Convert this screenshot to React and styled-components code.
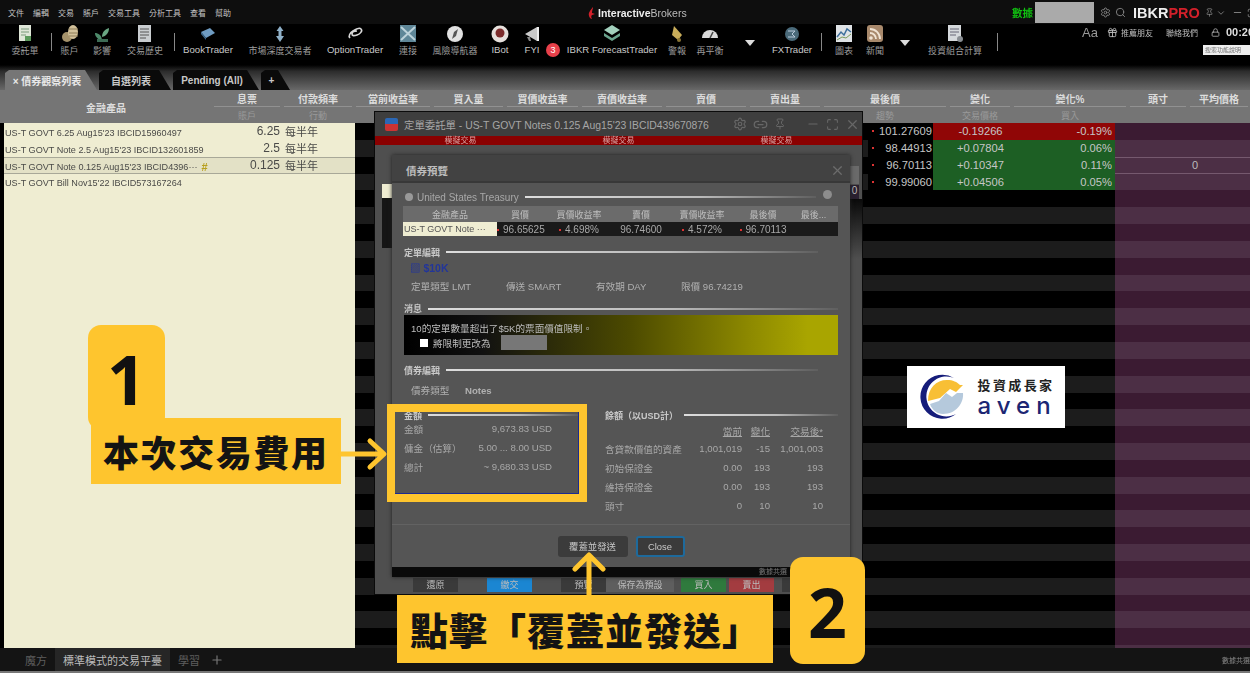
import React from "react";
import styled, { createGlobalStyle } from "styled-components";
import { Settings, Search, Pin, ChevronDown, Minus, Maximize, X, Link2, Gift, Lock, Plus } from "lucide-react";

const GlobalStyle = createGlobalStyle`
  html, body { margin: 0; padding: 0; background: #000; }
  body { font-family: "Liberation Sans", "Noto Sans CJK TC", sans-serif; }
  * { box-sizing: border-box; }
`;

const Page = styled.div`
  position: relative;
  width: 1250px;
  height: 673px;
  overflow: hidden;
  background: #000;
`;

const Screen = styled.div`
  display: flex;
  flex-direction: column;
  width: 1250px;
  height: 673px;
  filter: blur(0.55px);
`;

/* top menu bar */
const TopBar = styled.div`
  display: grid;
  grid-template-columns: 588px 300px 1fr;
  align-items: center;
  height: 24px;
  padding-top: 1px;
  background: #0e0e0e;
`;

const Menu = styled.div`
  display: flex;
  gap: 9px;
  padding-left: 8px;
  font-size: 8px;
  color: #c4c4c4;
`;

const Brand = styled.div`
  display: flex;
  align-items: center;
  gap: 2px;
  font-size: 10.5px;
  color: #bbb;
  b { color: #eee; }
`;

const TopRight = styled.div`
  display: flex;
  align-items: center;
  padding-left: 124px;
  color: #888;
`;

const DataTag = styled.span`
  width: 23px;
  font-size: 10.5px;
  font-weight: 700;
  color: #10c010;
`;

const Masked = styled.div`
  width: 59px;
  height: 21px;
  margin-right: 6px;
  background: #aaa;
`;

const Pro = styled.span`
  margin: 0 5px 0 7px;
  font-size: 14.5px;
  font-weight: 700;
  color: #eee;
  i { font-style: normal; color: #d3202a; }
`;

/* tool strip */
const Toolbar = styled.div`
  display: flex;
  height: 41px;
  background: #000;
`;

const Tool = styled.div`
  display: flex;
  flex-direction: column;
  align-items: center;
  flex: none;
  width: ${(p) => p.$w}px;
  white-space: nowrap;
  font-size: ${(p) => (p.$latin ? 9.6 : 9)}px;
  color: ${(p) => (p.$latin ? "#c8c8c8" : "#9c9c9c")};
  svg { flex: none; }
`;

const Divider = styled.div`
  flex: none;
  width: ${(p) => p.$w}px;
  height: 18px;
  margin-top: 9px;
  background: linear-gradient(#888, #888) no-repeat center / 1px 100%;
`;

const DropCaret = styled.div`
  flex: none;
  display: flex;
  justify-content: center;
  width: ${(p) => p.$w}px;
  padding-top: 16px;
  &::after {
    content: "";
    border-left: 5px solid transparent;
    border-right: 5px solid transparent;
    border-top: 6px solid #ddd;
    height: 0;
  }
`;

const Badge = styled.div`
  flex: none;
  align-self: flex-start;
  width: 14px;
  height: 14px;
  margin: 19px -1px 0 -3px;
  border-radius: 50%;
  background: #e8404a;
  color: #fff;
  font-size: 9px;
  line-height: 14px;
  text-align: center;
`;

const Extras = styled.div`
  flex: 1;
  display: flex;
  flex-direction: column;
  align-items: flex-end;
  overflow: hidden;
  margin-left: 77px;
`;

const ExtrasRow = styled.div`
  display: flex;
  align-items: center;
  align-self: flex-start;
  gap: 3px;
  height: 16px;
  white-space: nowrap;
  font-size: 8px;
  color: #bbb;
  em { font-style: normal; font-size: 13px; color: #999; margin-right: 1px; }
  strong { font-size: 11px; margin-left: 3px; color: #ddd; }
`;

const SearchBox = styled.div`
  width: 47px;
  height: 10px;
  margin-top: 5px;
  padding-left: 2px;
  background: #eee;
  color: #777;
  font-size: 6px;
  line-height: 10px;
  white-space: nowrap;
  overflow: hidden;
`;

/* tab strip */
const TabStrip = styled.div`
  display: flex;
  align-items: flex-end;
  gap: 2px;
  height: 25px;
  padding-left: 5px;
  background: linear-gradient(#000 0%, #2c2c2c 25%, #686868 100%);
`;

const Tab = styled.div`
  display: flex;
  align-items: center;
  justify-content: center;
  width: ${(p) => p.$w}px;
  height: 20px;
  padding-right: 8px;
  font-size: 10px;
  font-weight: 700;
  clip-path: polygon(0 15%, 4px 0, calc(100% - 12px) 0, 100% 100%, 0 100%);
  background: ${(p) => (p.$on ? "#767676" : "#0a0a0a")};
  color: ${(p) => (p.$on ? "#e8e8e8" : "#c8c8c8")};
`;

/* table header */
const HeadRow = styled.div`
  display: grid;
  grid-template-columns: 212px 70px 72px 78px 73px 75px 84px 84px 74px 126px 64px 116px 60px 1fr;
  height: 33px;
  padding-top: 1px;
  background: #757575;
`;

const HeadCell = styled.div`
  display: flex;
  flex-direction: column;
  align-items: center;
  justify-content: ${(p) => (p.$tall ? "center" : "flex-start")};
  margin: 0 2px;
  font-size: 10px;
  font-weight: 700;
  color: #ddd;
  white-space: nowrap;
`;

const HeadTop = styled.div`
  align-self: stretch;
  height: 16px;
  text-align: center;
  border-bottom: 1px solid #919191;
`;

const HeadSub = styled.div`
  margin-top: 2px;
  font-size: 9px;
  font-weight: 400;
  color: #9a9a9a;
`;

/* table body */
const Body = styled.div`
  flex: 1;
  display: flex;
  flex-direction: column;
  overflow: hidden;
  min-height: 0;
`;

const Row = styled.div`
  display: grid;
  grid-template-columns: 4px 228px 48px 75px 513px 65px 95px 87px 85px 50px;
  flex: none;
  height: 16.85px;
  align-items: stretch;
`;

const Gutter = styled.div`
  background: #000;
`;

const Cream = styled.div`
  display: flex;
  align-items: center;
  justify-content: ${(p) => (p.$end ? "flex-end" : "flex-start")};
  padding-left: ${(p) => (p.$pad ? p.$pad : 1)}px;
  padding-top: ${(p) => p.$pt || 0}px;
  background: ${(p) => (p.$picked ? "#e3e1c6" : "#efedd2")};
  border-top: ${(p) => (p.$picked ? "1px solid #a8a898" : "0")};
  border-bottom: ${(p) => (p.$picked ? "1px solid #a8a898" : "0")};
  font-size: ${(p) => p.$size || 9.1}px;
  color: #4a4a48;
  white-space: nowrap;
  overflow: hidden;
  i { margin-left: 4px; font-style: normal; color: #b8a020; font-weight: 700; font-size: 11px; }
`;

const Dark = styled.div`
  background: ${(p) => (p.$odd ? "#1c1c1c" : "#000")};
`;

const Quote = styled.div`
  display: flex;
  align-items: center;
  justify-content: space-between;
  padding: 0 1px 0 4px;
  font-size: 11.2px;
  color: #c6c6c6;
  white-space: nowrap;
  background: ${(p) => (p.$tone === "red" ? "#900606" : p.$tone === "green" ? "#1d5f24" : "#000")};
  u { text-decoration: none; width: 2px; height: 2px; background: #d33; }
`;

const Change = styled(Quote)`
  justify-content: ${(p) => (p.$center ? "center" : "flex-end")};
  padding: 0 ${(p) => (p.$center ? 0 : 3)}px 0 0;
`;

const Plum = styled.div`
  display: flex;
  align-items: center;
  justify-content: flex-end;
  padding-right: 2px;
  font-size: 11px;
  color: #bbb;
  background: ${(p) => (p.$odd ? "#4c2f45" : "#3b1b32")};
  border-top: ${(p) => (p.$line ? "1px solid #75596e" : "0")};
  border-bottom: ${(p) => (p.$line ? "1px solid #75596e" : "0")};
`;

const BottomTabs = styled.div`
  display: flex;
  align-items: center;
  height: 25px;
  padding-left: 17px;
  background: #141414;
  border-bottom: 2px solid #777;
  font-size: 11px;
  color: #555;
`;

const BottomTab = styled.div`
  display: flex;
  align-items: center;
  height: 23px;
  padding: 0 8px;
  background: ${(p) => (p.$on ? "#262626" : "transparent")};
  color: ${(p) => (p.$on ? "#bdbdbd" : "#5e5e5e")};
`;

const BottomNote = styled.div`
  margin-left: auto;
  font-size: 7px;
  color: #888;
`;

/* order window */
const OrderWindow = styled.div`
  position: absolute;
  left: 375px;
  top: 112px;
  width: 487px;
  height: 482px;
  display: flex;
  flex-direction: column;
  background: #4f4f4f;
  box-shadow: 0 0 0 1px #0b0b0b;
`;

const OrderTitle = styled.div`
  display: flex;
  align-items: center;
  gap: 6px;
  height: 24px;
  padding: 0 2px 0 10px;
  background: #3e3e3e;
  font-size: 10.4px;
  color: #a6a6a6;
  white-space: nowrap;
`;

const Flag = styled.div`
  width: 13px;
  height: 13px;
  background: linear-gradient(#2b67b5 50%, #c33 50%);
  border-radius: 2px;
`;

const TitleTools = styled.div`
  display: flex;
  align-items: center;
  gap: 6px;
  margin-left: auto;
  color: #676767;
`;

const SimBand = styled.div`
  display: grid;
  grid-template-columns: repeat(3, 158px);
  justify-content: center;
  height: 9px;
  background: #8a0000;
  font-size: 8px;
  line-height: 9px;
  text-align: center;
  color: #d8a0a0;
`;

const OrderButtons = styled.div`
  display: flex;
  margin-top: auto;
  height: 14px;
  margin-bottom: 2px;
  padding-left: 38px;
`;

const OrderButton = styled.div`
  flex: none;
  width: ${(p) => p.$w}px;
  margin-left: ${(p) => p.$ml || 0}px;
  background: ${(p) => p.$bg};
  color: #bbb;
  font-size: 9px;
  line-height: 14px;
  text-align: center;
  white-space: nowrap;
  overflow: hidden;
`;

const SideStub = styled.div`
  position: absolute;
  left: ${(p) => p.$x}px;
  top: ${(p) => p.$y}px;
  width: ${(p) => p.$w}px;
  height: ${(p) => p.$h}px;
  background: ${(p) => p.$bg};
  color: #bbb;
  font-size: 10px;
  text-align: center;
`;

/* preview dialog */
const Preview = styled.div`
  position: absolute;
  left: 17px;
  top: 43px;
  width: 458px;
  height: 422px;
  display: flex;
  flex-direction: column;
  background: #555;
  box-shadow: 0 0 4px #222;
`;

const PreviewTitle = styled.div`
  display: flex;
  align-items: center;
  justify-content: space-between;
  height: 28px;
  padding: 4px 5px 0 14px;
  background: #424242;
  border-bottom: 2px solid #383838;
  font-size: 10.5px;
  font-weight: 700;
  color: #bdbdbd;
`;

const PreviewBody = styled.div`
  flex: 1;
  display: flex;
  flex-direction: column;
  padding: 7px 12px 0;
`;

const Section = styled.div`
  display: flex;
  align-items: center;
  gap: 6px;
  flex: none;
  height: ${(p) => p.$h || 14}px;
  margin-top: ${(p) => p.$mt || 0}px;
  font-size: ${(p) => (p.$plain ? 10 : 9)}px;
  font-weight: ${(p) => (p.$plain ? 400 : 700)};
  color: ${(p) => (p.$plain ? "#a8a8a8" : "#c8c8c8")};
  white-space: nowrap;
  &::after {
    content: "";
    flex: 1;
    height: 2px;
    margin-right: ${(p) => p.$end || 0}px;
    background: linear-gradient(90deg, #ddd 0%, #bbb 60%, #5f5f5f 100%);
  }
`;

const Dot = styled.span`
  width: 8px;
  height: 8px;
  margin-left: 1px;
  margin-right: -2px;
  border-radius: 50%;
  background: #999;
`;

const SectionKnob = styled.span`
  position: absolute;
  right: 18px;
  top: 35px;
  width: 9px;
  height: 9px;
  border-radius: 50%;
  background: #8d8d8d;
`;

const Quotes = styled.div`
  flex: none;
  margin-top: 2px;
  margin-left: -1px;
  width: 435px;
`;

const QuoteGrid = styled.div`
  display: grid;
  grid-template-columns: 94px 46px 72px 52px 70px 52px 49px;
  height: ${(p) => p.$h}px;
  align-items: center;
  background: ${(p) => p.$bg};
  font-size: ${(p) => p.$size}px;
  color: ${(p) => p.$color};
  text-align: center;
  white-space: nowrap;
`;

const QuoteName = styled.div`
  align-self: stretch;
  background: #efedd2;
  color: #555;
  font-size: 9px;
  line-height: 14px;
  text-align: left;
  padding-left: 1px;
`;

const Tick = styled.span`
  display: inline-block;
  width: 2px;
  height: 2px;
  margin-right: 4px;
  vertical-align: middle;
  background: #d33;
`;

const Dim = styled.div`
  flex: none;
  height: 14px;
  margin-top: 1px;
  padding-left: 6px;
  font-size: 10.5px;
  font-weight: 700;
  color: #22359a;
`;

const Facts = styled.div`
  display: flex;
  flex: none;
  height: 14px;
  margin-top: 6px;
  padding-left: 7px;
  font-size: 9.6px;
  line-height: 14px;
  color: #b0b0b0;
  white-space: nowrap;
`;

const Fact = styled.span`
  width: ${(p) => p.$w}px;
  flex: none;
`;

const Banner = styled.div`
  flex: none;
  height: 40px;
  padding: 5px 7px 0;
  background: linear-gradient(90deg, #000 0%, #111 18%, #4c4a00 52%, #8e8a00 80%, #a9a500 93%);
  font-size: 9.6px;
  color: #bdbdbd;
`;

const BannerLine = styled.div`
  display: flex;
  align-items: center;
  gap: 5px;
  height: 15px;
  padding-left: ${(p) => p.$pad || 0}px;
  white-space: nowrap;
`;

const CheckBox = styled.div`
  width: 8px;
  height: 8px;
  background: #fff;
`;

const BlankInput = styled.div`
  width: 46px;
  height: 15px;
  margin-left: 5px;
  background: #777;
`;

const Columns = styled.div`
  display: grid;
  grid-template-columns: 175px 233px;
  column-gap: 26px;
  flex: none;
  height: 116px;
  margin-top: 10px;
`;

const Pairs = styled.div`
  margin-top: -3px;
`;

const Pair = styled.div`
  display: flex;
  align-items: center;
  justify-content: space-between;
  width: 148px;
  height: 19px;
  font-size: 9.6px;
  color: #a8a8a8;
  white-space: nowrap;
`;

const Margins = styled.div`
  display: grid;
  grid-template-columns: 92px 45px 28px 53px;
  grid-template-rows: 16px;
  grid-auto-rows: 19px;
  align-items: center;
  margin-top: 1px;
  font-size: 9.6px;
  color: #a8a8a8;
  white-space: nowrap;
`;

const Num = styled.div`
  text-align: right;
  text-decoration: ${(p) => (p.$head ? "underline" : "none")};
`;

const PreviewFooter = styled.div`
  display: flex;
  justify-content: center;
  gap: 8px;
  flex: none;
  height: 43px;
  padding-top: 11px;
  border-top: 1px solid #626262;
  background: #555;
`;

const DialogButton = styled.div`
  width: ${(p) => p.$w}px;
  height: 21px;
  border-radius: 3px;
  background: #3b3b3b;
  border: ${(p) => (p.$focus ? "2px solid #1e6a9c" : "0")};
  color: #c8c8c8;
  font-size: 9.4px;
  line-height: ${(p) => (p.$focus ? 17 : 21)}px;
  text-align: center;
`;

const StatusBar = styled.div`
  flex: none;
  height: 10px;
  padding-right: 63px;
  background: #0a0a0a;
  color: #777;
  font-size: 7px;
  line-height: 10px;
  text-align: right;
`;

/* logo stamp */
const LogoCard = styled.div`
  position: absolute;
  left: 907px;
  top: 366px;
  width: 158px;
  height: 62px;
  display: flex;
  align-items: center;
  gap: 9px;
  padding-left: 11px;
  background: #fff;
`;

const LogoText = styled.div`
  display: flex;
  flex-direction: column;
  align-items: center;
  width: 82px;
`;

const LogoName = styled.div`
  font-size: 13px;
  font-weight: 700;
  letter-spacing: 2.4px;
  color: #222;
  line-height: 17px;
  white-space: nowrap;
`;

const LogoLatin = styled.div`
  font-family: "Inter", "Liberation Sans", sans-serif;
  font-size: 24px;
  font-weight: 500;
  letter-spacing: 6px;
  line-height: 23px;
  margin-right: -2px;
  color: #1c2673;
`;

/* tutorial callouts */
const NumberTile = styled.div`
  position: absolute;
  left: ${(p) => p.$x}px;
  top: ${(p) => p.$y}px;
  width: ${(p) => p.$w}px;
  height: ${(p) => p.$h}px;
  padding-top: ${(p) => p.$pt}px;
  border-radius: 13px;
  background: #fec52e;
  color: #111;
  font-family: "Noto Sans", "Liberation Sans", sans-serif;
  font-size: 68px;
  font-weight: 700;
  line-height: 68px;
  text-align: center;
`;

const Callout = styled.div`
  position: absolute;
  left: ${(p) => p.$x}px;
  top: ${(p) => p.$y}px;
  width: ${(p) => p.$w}px;
  height: ${(p) => p.$h}px;
  padding-left: ${(p) => p.$pl}px;
  background: #fec52e;
  color: #141414;
  font-family: "Noto Sans CJK TC", sans-serif;
  font-size: ${(p) => p.$size}px;
  font-weight: 900;
  letter-spacing: ${(p) => p.$ls}px;
  line-height: ${(p) => p.$h}px;
  white-space: nowrap;
`;

const Highlight = styled.div`
  position: absolute;
  left: 387px;
  top: 404px;
  width: 200px;
  height: 98px;
  border: 8px solid #fec52e;
  box-shadow: inset -1px -1px 0 #1b2a92;
`;

const Arrow = styled.svg`
  position: absolute;
  left: ${(p) => p.$x}px;
  top: ${(p) => p.$y}px;
  overflow: visible;
`;

const ico = {
  order: <><rect x="4" y="1" width="12" height="16" fill="#dfe6d8" /><path d="M6 5h8M6 8h8M6 11h5" stroke="#7a9a7a" /><rect x="10" y="12" width="6" height="5" fill="#5c9a5c" /></>,
  coins: <><ellipse cx="7" cy="13" rx="5" ry="5" fill="#a5926a" /><ellipse cx="13" cy="8" rx="5" ry="7" fill="#d2c19a" /><path d="M9 5h9M9 9h9M9 12h9" stroke="#8e7d58" /></>,
  plant: <><path d="M10 17C10 11 6 9 3 9c0 4 3 6 7 8Z" fill="#4d8a6a" /><path d="M10 13c0-6 4-8 7-9 0 5-3 8-7 9Z" fill="#6aa683" /><rect x="5" y="15" width="11" height="3" fill="#3d6b55" /></>,
  doc: <><rect x="3" y="1" width="13" height="17" fill="#c9cdd0" /><path d="M5 5h9M5 8h9M5 11h9M5 14h6" stroke="#555" /></>,
  book: <><path d="M3 8l9-4 5 5-9 5Z" fill="#6f9cc2" /><path d="M3 8l5 6v2L3 10Z" fill="#3e6a8e" /></>,
  updown: <path d="M10 2l3.5 5H11.500v5H14l-4 6-4-6h2.500V7H6.500Z" fill="#8fb0c8" />,
  clip: <path d="M5 14c-2-2 0-5 3-7s6-4 8-2-1 5-4 6-5 1-5-1 3-3 5-3" fill="none" stroke="#d8d8d8" strokeWidth="1.6" />,
  grid: <><rect x="2" y="1" width="16" height="17" fill="#5f8798" /><path d="M3 3l14 13M17 3L3 16" stroke="#bcd2da" strokeWidth="2" /></>,
  compass: <><circle cx="10" cy="10" r="8" fill="#e2e2e2" /><path d="M13 5l-2 7-4 3 2-7Z" fill="#555" /></>,
  ibot: <><circle cx="10" cy="10" r="8.500" fill="#e6e0dc" /><circle cx="10" cy="9" r="4.500" fill="#7d2c2c" /></>,
  horn: <><path d="M3 10l12-7v14Z" fill="#c9c9c9" /><path d="M5 13l2 4h2l-1-4Z" fill="#888" /><rect x="15" y="3" width="2" height="14" fill="#eee" /></>,
  layers: <><path d="M10 1l8 5-8 5-8-5Z" fill="#a3d0bd" /><path d="M2 9l8 5 8-5v3l-8 5-8-5Z" fill="#6aa38d" /></>,
  bell: <><path d="M7 2l8 9-4 5-6-5Z" fill="#c9ad5a" /><circle cx="12" cy="16" r="2" fill="#8a7434" /></>,
  gauge: <><path d="M2 14a8 8 0 0 1 16 0Z" fill="#d9d9d9" /><path d="M10 14l3-6" stroke="#444" strokeWidth="1.500" /></>,
  globe: <><circle cx="10" cy="10" r="7" fill="#4a6a7a" /><path d="M6 7h7l-3 3 3 3H6" fill="none" stroke="#bcd" /></>,
  chart: <><rect x="2" y="1" width="16" height="17" fill="#dfe3e6" /><path d="M3 13l4-5 3 3 3-6 4 3" fill="none" stroke="#3d6f9c" strokeWidth="1.500" /><path d="M3 16l5-3 4 1 5-4" fill="none" stroke="#7a9a5a" /></>,
  rss: <><rect x="2" y="1" width="16" height="17" rx="3" fill="#a8896c" /><circle cx="6" cy="14" r="1.800" fill="#f0e4d4" /><path d="M5 9a6 6 0 0 1 6 6M5 5a10 10 0 0 1 10 10" fill="none" stroke="#f0e4d4" strokeWidth="1.800" /></>,
  calc: <><rect x="3" y="1" width="13" height="16" fill="#d5d9dc" /><path d="M5 5h9M5 8h9M5 11h6" stroke="#667" /><circle cx="15" cy="15" r="3" fill="#8a8f94" /></>,
};

const ToolIcon = ({ kind }) => (
  <svg width="20" height="20" viewBox="0 0 20 20">{ico[kind]}</svg>
);

const tools = [
  { t: "委託單", w: 50, k: "order" },
  { sep: 2 },
  { t: "賬戶", w: 35, k: "coins" },
  { t: "影響", w: 30, k: "plant" },
  { t: "交易歷史", w: 56, k: "doc" },
  { sep: 2 },
  { t: "BookTrader", w: 66, k: "book", latin: true },
  { t: "市場深度交易者", w: 78, k: "updown" },
  { t: "OptionTrader", w: 72, k: "clip", latin: true },
  { t: "連接", w: 34, k: "grid" },
  { t: "風險導航器", w: 60, k: "compass" },
  { t: "IBot", w: 30, k: "ibot", latin: true },
  { t: "FYI", w: 34, k: "horn", latin: true },
  { badge: "3" },
  { t: "IBKR ForecastTrader", w: 106, k: "layers", latin: true },
  { t: "警報", w: 24, k: "bell" },
  { t: "再平衡", w: 42, k: "gauge" },
  { drop: 38 },
  { t: "FXTrader", w: 46, k: "globe", latin: true },
  { sep: 12 },
  { t: "圖表", w: 34, k: "chart" },
  { t: "新聞", w: 28, k: "rss" },
  { drop: 32 },
  { t: "投資組合計算", w: 68, k: "calc" },
  { sep: 16 },
];

const headers = [
  { t: "金融產品", tall: true },
  { t: "息票", s: "賬戶" },
  { t: "付款頻率", s: "行動" },
  { t: "當前收益率" },
  { t: "買入量" },
  { t: "買價收益率" },
  { t: "賣價收益率" },
  { t: "賣價" },
  { t: "賣出量" },
  { t: "最後價", s: "趨勢" },
  { t: "變化", s: "交易價格" },
  { t: "變化%", s: "買入" },
  { t: "頭寸" },
  { t: "平均價格" },
];

const bonds = [
  { name: "US-T GOVT 6.25 Aug15'23 IBCID15960497", cp: "6.25", last: "101.27609", chg: "-0.19266", pct: "-0.19%", tone: "red" },
  { name: "US-T GOVT Note 2.5 Aug15'23 IBCID132601859", cp: "2.5", last: "98.44913", chg: "+0.07804", pct: "0.06%", tone: "green" },
  { name: "US-T GOVT Note 0.125 Aug15'23 IBCID4396···", cp: "0.125", last: "96.70113", chg: "+0.10347", pct: "0.11%", tone: "green", picked: true, pos: "0" },
  { name: "US-T GOVT Bill Nov15'22 IBCID573167264", last: "99.99060", chg: "+0.04506", pct: "0.05%", tone: "green" },
];

const emptyRows = Array.from({ length: 28 }, (_, i) => i);

export default function App() {
  return (
    <Page>
      <GlobalStyle />
      <Screen>
        <TopBar>
          <Menu>
            {["文件", "編輯", "交易", "賬戶", "交易工具", "分析工具", "查看", "幫助"].map((m) => (
              <span key={m}>{m}</span>
            ))}
          </Menu>
          <Brand>
            <svg width="8" height="12" viewBox="0 0 8 12">
              <path d="M5 0C3 3 0 5 1 9c.5 2 2 3 3 3-1-2-1-3 0-4l3-1-3-1c0-2 .5-3 1-5Z" fill="#d3202a" />
            </svg>
            <span><b>Interactive</b>Brokers</span>
          </Brand>
          <TopRight>
            <DataTag>數據</DataTag>
            <Masked />
            <Settings size={11} />
            <Search size={11} style={{ marginLeft: 4 }} />
            <Pro>IBKR<i>PRO</i></Pro>
            <Pin size={9} />
            <ChevronDown size={10} style={{ marginLeft: 2 }} />
            <Minus size={11} style={{ marginLeft: 6 }} />
            <Maximize size={10} style={{ marginLeft: 4 }} />
          </TopRight>
        </TopBar>

        <Toolbar>
          {tools.map((it, i) => {
            if (it.sep) return <Divider key={i} $w={it.sep} />;
            if (it.drop) return <DropCaret key={i} $w={it.drop} />;
            if (it.badge) return <Badge key={i}>{it.badge}</Badge>;
            return (
              <Tool key={i} $w={it.w} $latin={it.latin}>
                <ToolIcon kind={it.k} />
                <span>{it.t}</span>
              </Tool>
            );
          })}
          <Extras>
            <ExtrasRow>
              <em>Aa</em>
              <Gift size={11} style={{ marginLeft: 5 }} />
              <span>推薦朋友</span>
              <span style={{ marginLeft: 10 }}>聯絡我們</span>
              <Lock size={9} style={{ marginLeft: 10 }} />
              <strong>00:20</strong>
            </ExtrasRow>
            <SearchBox>搜索功能說明</SearchBox>
          </Extras>
        </Toolbar>

        <TabStrip>
          <Tab $on $w={92}>× 債券觀察列表</Tab>
          <Tab $w={72}>自選列表</Tab>
          <Tab $w={86}>Pending (All)</Tab>
          <Tab $w={29}>+</Tab>
        </TabStrip>

        <HeadRow>
          {headers.map((h) =>
            h.tall ? (
              <HeadCell key={h.t} $tall>{h.t}</HeadCell>
            ) : (
              <HeadCell key={h.t}>
                <HeadTop>{h.t}</HeadTop>
                {h.s && <HeadSub>{h.s}</HeadSub>}
              </HeadCell>
            )
          )}
        </HeadRow>

        <Body>
          {bonds.map((b, i) => (
            <Row key={b.name}>
              <Gutter />
              <Cream $picked={b.picked} $pt={3}>
                {b.name}
                {b.picked && <i>#</i>}
              </Cream>
              <Cream $picked={b.picked} $end $size={12}>{b.cp}</Cream>
              <Cream $picked={b.picked} $size={11} $pad={5}>{b.cp && "每半年"}</Cream>
              <Dark $odd={i % 2 === 1} />
              <Quote><u />{b.last}</Quote>
              <Change $tone={b.tone} $center>{b.chg}</Change>
              <Change $tone={b.tone}>{b.pct}</Change>
              <Plum $odd={i > 0} $line={b.picked}>{b.pos}</Plum>
              <Plum $odd={i > 0} $line={b.picked} />
            </Row>
          ))}
          {emptyRows.map((i) => (
            <Row key={i}>
              <Gutter />
              <Cream />
              <Cream />
              <Cream />
              <Dark $odd={i % 2 === 1} />
              <Dark $odd={i % 2 === 1} />
              <Dark $odd={i % 2 === 1} />
              <Dark $odd={i % 2 === 1} />
              <Plum $odd={i % 2 === 1} />
              <Plum $odd={i % 2 === 1} />
            </Row>
          ))}
        </Body>

        <BottomTabs>
          <BottomTab>魔方</BottomTab>
          <BottomTab $on>標準模式的交易平臺</BottomTab>
          <BottomTab>學習</BottomTab>
          <Plus size={14} color="#777" style={{ marginLeft: 2 }} />
          <BottomNote>數據共選</BottomNote>
        </BottomTabs>

        <OrderWindow>
          <OrderTitle>
            <Flag />
            <span>定單委託單 - US-T GOVT Notes 0.125 Aug15'23 IBCID439670876</span>
            <TitleTools>
              <Settings size={14} />
              <Link2 size={15} />
              <Pin size={12} />
              <Minus size={14} style={{ marginLeft: 14 }} />
              <Maximize size={13} />
              <X size={15} />
            </TitleTools>
          </OrderTitle>
          <SimBand>
            <span>模擬交易</span>
            <span>模擬交易</span>
            <span>模擬交易</span>
          </SimBand>
          <SideStub $x={7} $y={72} $w={10} $h={14} $bg="#efedd2" />
          <SideStub $x={7} $y={86} $w={10} $h={50} $bg="#151515" />
          <SideStub $x={475} $y={54} $w={9} $h={18} $bg="#6a6a6a" />
          <SideStub $x={475} $y={73} $w={9} $h={14} $bg="#2a2030">0</SideStub>
          <SideStub $x={475} $y={87} $w={12} $h={60} $bg="linear-gradient(#0a0a0a, #4f4f4f)" />
          <OrderButtons>
            <OrderButton $w={45} $bg="#3a3a3a">還原</OrderButton>
            <OrderButton $w={45} $ml={29} $bg="#1b86d2">繳交</OrderButton>
            <OrderButton $w={45} $ml={29} $bg="#3a3a3a">預覽</OrderButton>
            <OrderButton $w={68} $bg="#5e5e5e">保存為預設</OrderButton>
            <OrderButton $w={45} $ml={7} $bg="#2f7a3d">買入</OrderButton>
            <OrderButton $w={45} $ml={3} $bg="#a33c40">賣出</OrderButton>
            <OrderButton $w={12} $ml={8} $bg="#3a3a3a" />
          </OrderButtons>

          <Preview>
            <PreviewTitle>
              <span>債券預覽</span>
              <X size={15} color="#6c6c6c" />
            </PreviewTitle>
            <PreviewBody>
              <Section $plain $end={22}>
                <Dot />
                United States Treasury
              </Section>
              <SectionKnob />
              <Quotes>
                <QuoteGrid $h={16} $bg="#6b6b6b" $size={9} $color="#bdbdbd">
                  <span>金融產品</span>
                  <span>買價</span>
                  <span>買價收益率</span>
                  <span>賣價</span>
                  <span>賣價收益率</span>
                  <span>最後價</span>
                  <span>最後...</span>
                </QuoteGrid>
                <QuoteGrid $h={14} $bg="#1a1a1a" $size={10} $color="#a8a8a8">
                  <QuoteName>US-T GOVT Note ···</QuoteName>
                  <span><Tick />96.65625</span>
                  <span><Tick />4.698%</span>
                  <span>96.74600</span>
                  <span><Tick />4.572%</span>
                  <span><Tick />96.70113</span>
                  <span />
                </QuoteGrid>
              </Quotes>

              <Section $mt={9} $end={20}>定單編輯</Section>
              <Dim>▨ $10K</Dim>
              <Facts>
                <Fact $w={95}>定單類型 LMT</Fact>
                <Fact $w={90}>傳送 SMART</Fact>
                <Fact $w={85}>有效期 DAY</Fact>
                <Fact $w={100}>限價 96.74219</Fact>
              </Facts>

              <Section $mt={8} $h={13}>消息</Section>
              <Banner>
                <BannerLine>10的定單數量超出了$5K的票面價值限制。</BannerLine>
                <BannerLine $pad={9}>
                  <CheckBox />
                  將限制更改為
                  <BlankInput />
                </BannerLine>
              </Banner>

              <Section $mt={8} $end={20}>債券編輯</Section>
              <Facts style={{ marginTop: 7 }}>
                <Fact $w={54}>債券類型</Fact>
                <b>Notes</b>
              </Facts>

              <Columns>
                <div>
                  <Section>金額</Section>
                  <Pairs>
                    <Pair><span>金額</span><span>9,673.83 USD</span></Pair>
                    <Pair><span>傭金（估算）</span><span>5.00 ... 8.00 USD</span></Pair>
                    <Pair><span>總計</span><span>~ 9,680.33 USD</span></Pair>
                  </Pairs>
                </div>
                <div>
                  <Section>餘額（以USD計）</Section>
                  <Margins>
                    <span />
                    <Num $head>當前</Num>
                    <Num $head>變化</Num>
                    <Num $head>交易後*</Num>
                    <span>含貸款價值的資產</span>
                    <Num>1,001,019</Num>
                    <Num>-15</Num>
                    <Num>1,001,003</Num>
                    <span>初始保證金</span>
                    <Num>0.00</Num>
                    <Num>193</Num>
                    <Num>193</Num>
                    <span>維持保證金</span>
                    <Num>0.00</Num>
                    <Num>193</Num>
                    <Num>193</Num>
                    <span>頭寸</span>
                    <Num>0</Num>
                    <Num>10</Num>
                    <Num>10</Num>
                  </Margins>
                </div>
              </Columns>
            </PreviewBody>
            <PreviewFooter>
              <DialogButton $w={70}>覆蓋並發送</DialogButton>
              <DialogButton $w={49} $focus>Close</DialogButton>
            </PreviewFooter>
            <StatusBar>數據共選</StatusBar>
          </Preview>
        </OrderWindow>
      </Screen>

      <LogoCard>
        <svg width="48" height="48" viewBox="0 0 48 48">
          <path d="M10 28C10 15 18 7 29 7c6 0 10 2 13 5h3l-7 7-6-3-10 9Z" fill="#f8bf35" />
          <path d="M12 31l9-3 7-8 6 4 5-4h6c1 10-7 21-20 21-6 0-11-4-13-10Z" fill="#b5c9dc" />
          <path d="M36 5A22 22 0 1 0 38 41A20 20 0 1 1 36 5Z" fill="#151c7a" />
        </svg>
        <LogoText>
          <LogoName>投資成長家</LogoName>
          <LogoLatin>aven</LogoLatin>
        </LogoText>
      </LogoCard>

      <Highlight />
      <NumberTile $x={88} $y={325} $w={77} $h={105} $pt={20}>1</NumberTile>
      <Callout $x={91} $y={418} $w={250} $h={66} $pl={12} $size={36} $ls={1.6}>本次交易費用</Callout>
      <Arrow $x={340} $y={436} width="48" height="36" viewBox="0 0 48 36">
        <path d="M1 18H43M30 5l14 13-14 13" fill="none" stroke="#fec52e" strokeWidth="5" strokeLinecap="round" strokeLinejoin="round" />
      </Arrow>
      <Arrow $x={571} $y={552} width="36" height="44" viewBox="0 0 36 44">
        <path d="M18 44V4M4 17L18 3l14 14" fill="none" stroke="#fec52e" strokeWidth="5" strokeLinecap="round" strokeLinejoin="round" />
      </Arrow>
      <Callout $x={397} $y={595} $w={376} $h={68} $pl={13} $size={38} $ls={1}>點擊「覆蓋並發送」</Callout>
      <NumberTile $x={790} $y={557} $w={75} $h={107} $pt={21}>2</NumberTile>
    </Page>
  );
}
